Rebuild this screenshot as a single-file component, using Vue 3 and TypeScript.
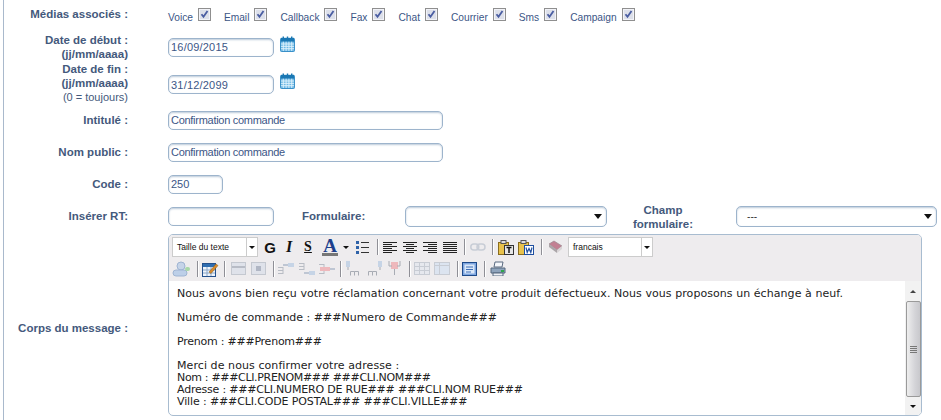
<script setup lang="ts">
const medias: string[] = ['Voice', 'Email', 'Callback', 'Fax', 'Chat', 'Courrier', 'Sms', 'Campaign']
const message: { text: string; track: number }[] = [
  { text: 'Nous avons bien reçu votre réclamation concernant votre produit défectueux. Nous vous proposons un échange à neuf.', track: 0.06 },
  { text: '', track: 0 },
  { text: 'Numéro de commande : ###Numero de Commande###', track: 0 },
  { text: '', track: 0 },
  { text: 'Prenom : ###Prenom###', track: -0.24 },
  { text: '', track: 0 },
  { text: 'Merci de nous confirmer votre adresse :', track: 0.08 },
  { text: 'Nom : ###CLI.PRENOM### ###CLI.NOM###', track: -0.33 },
  { text: 'Adresse : ###CLI.NUMERO DE RUE### ###CLI.NOM RUE###', track: -0.2 },
  { text: 'Ville : ###CLI.CODE POSTAL### ###CLI.VILLE###', track: -0.13 }
]
</script>

<template>
  <div class="page">
    <div class="row r-media">
      <div class="label up">Médias associés :</div>
      <div class="medias">
        <label v-for="m in medias" :key="m" class="media">
          <span>{{ m }}</span>
          <svg class="cb" width="13" height="13" viewBox="0 0 13 13">
            <rect x=".5" y=".5" width="12" height="12" fill="#dde0ea" stroke="#8f8f8f" />
            <rect x="1.5" y="1.5" width="10" height="10" fill="none" stroke="#f2f3f8" />
            <path d="M3.5 6.2 5.5 8.8 9.500 3" fill="none" stroke="#4a5da2" stroke-width="1.800" />
          </svg>
        </label>
      </div>
    </div>

    <div class="row r-d1">
      <div class="label lines"><span>Date de début :</span><span>(jj/mm/aaaa)</span></div>
      <input class="inp w-date" value="16/09/2015" />
      <svg class="cal" width="15" height="16" viewBox="0 0 16 17">
        <rect x=".5" y="2.5" width="15" height="14" rx="1" fill="#6fb9e6" stroke="#2f8ac4" />
        <rect x="1" y="2" width="14" height="4" fill="#1a78b4" />
        <path d="M3.5 .5v3M8 .5v3M12.5 .5v3" stroke="#1a78b4" stroke-width="1.500" />
        <path d="M1 8.500h14M1 11h14M1 13.500h14M3.500 6v10M6.500 6v10M9.500 6v10M12.500 6v10" stroke="#e0f2fc" />
      </svg>
    </div>

    <div class="row r-d2">
      <div class="label lines">
        <span>Date de fin :</span><span>(jj/mm/aaaa)</span><span class="thin">(0 = toujours)</span>
      </div>
      <input class="inp w-date low-inp" value="31/12/2099" />
      <svg class="cal low-cal" width="15" height="16" viewBox="0 0 16 17">
        <rect x=".5" y="2.5" width="15" height="14" rx="1" fill="#6fb9e6" stroke="#2f8ac4" />
        <rect x="1" y="2" width="14" height="4" fill="#1a78b4" />
        <path d="M3.5 .5v3M8 .5v3M12.5 .5v3" stroke="#1a78b4" stroke-width="1.500" />
        <path d="M1 8.500h14M1 11h14M1 13.500h14M3.500 6v10M6.500 6v10M9.500 6v10M12.500 6v10" stroke="#e0f2fc" />
      </svg>
    </div>

    <div class="row r-std">
      <div class="label">Intitulé :</div>
      <input class="inp w-long" value="Confirmation commande" />
    </div>
    <div class="row r-std">
      <div class="label">Nom public :</div>
      <input class="inp w-long" value="Confirmation commande" />
    </div>
    <div class="row r-std">
      <div class="label">Code :</div>
      <input class="inp w-code" value="250" />
    </div>

    <div class="row r-std">
      <div class="label">Insérer RT:</div>
      <input class="inp w-date" value="" />
      <div class="label-form">Formulaire:</div>
      <div class="sel w-form"><i class="tri"></i></div>
      <div class="label-champ">Champ<br />formulaire:</div>
      <div class="sel w-champ"><span>---</span><i class="tri"></i></div>
    </div>

    <div class="row r-editor">
      <div class="label low">Corps du message :</div>
      <div class="editor">
        <div class="toolbar">
          <div class="tbrow">
            <div class="mini w-size"><span>Taille du texte</span><b><i class="tri small"></i></b></div>
            <span class="glyph g-g">G</span>
            <span class="glyph g-i">I</span>
            <span class="glyph g-s">S</span>
            <span class="glyph g-a">A<i class="a-bar"></i></span>
            <i class="tri small a-tri"></i>
            <svg class="ic l-list" width="14" height="14" viewBox="0 0 14 14">
              <path d="M1 1h3v3H1zM1 6h3v3H1zM1 11h3v3H1z" fill="#2f62a8" />
              <path d="M6 2.500h8M6 7.500h8M6 12.500h8" stroke="#333" />
            </svg>
            <i class="sep s-a"></i>
            <svg class="ic l-al1" width="14" height="11" viewBox="0 0 14 11"><path d="M0 .5h14M0 2.500h9M0 4.500h14M0 6.500h9M0 8.500h14M0 10.500h9" stroke="#222" /></svg>
            <svg class="ic l-al" width="14" height="11" viewBox="0 0 14 11"><path d="M0 .5h14M3 2.500h8M0 4.500h14M3 6.500h8M0 8.500h14M3 10.500h8" stroke="#222" /></svg>
            <svg class="ic l-al" width="14" height="11" viewBox="0 0 14 11"><path d="M0 .5h14M5 2.500h9M0 4.500h14M5 6.500h9M0 8.500h14M5 10.500h9" stroke="#222" /></svg>
            <svg class="ic l-al" width="14" height="11" viewBox="0 0 14 11"><path d="M0 .5h14M0 2.500h14M0 4.500h14M0 6.500h14M0 8.500h14M0 10.500h14" stroke="#222" /></svg>
            <i class="sep s-b"></i>
            <svg class="ic l-link" width="16" height="8" viewBox="0 0 16 8">
              <rect x=".8" y="1" width="8" height="6" rx="3" fill="none" stroke="#c8cdd6" stroke-width="1.500" />
              <rect x="7" y="1" width="8" height="6" rx="3" fill="none" stroke="#c8cdd6" stroke-width="1.500" />
            </svg>
            <i class="sep s-c"></i>
            <svg class="ic l-p1" width="16" height="15" viewBox="0 0 16 15">
              <rect x=".5" y="2.500" width="10" height="12" fill="#e8c24c" stroke="#8a6d1f" />
              <rect x="3" y=".5" width="5" height="3" fill="#ddd" stroke="#555" />
              <rect x="6.500" y="5.500" width="9" height="9" fill="#e6e6e6" stroke="#333" />
              <path d="M8.500 7.500h5M11 7.500v5.500" stroke="#111" stroke-width="1.500" />
            </svg>
            <svg class="ic l-p2" width="16" height="15" viewBox="0 0 16 15">
              <rect x=".5" y="2.500" width="10" height="12" fill="#e8c24c" stroke="#8a6d1f" />
              <rect x="3" y=".5" width="5" height="3" fill="#ddd" stroke="#555" />
              <rect x="6.500" y="5.500" width="9" height="9" fill="#fff" stroke="#1e4fa0" />
              <path d="M8 7.500l1.200 5 1.800-4 1.800 4 1.200-5" fill="none" stroke="#1e4fa0" stroke-width="1.200" />
            </svg>
            <i class="sep s-d"></i>
            <svg class="ic l-book" width="15" height="14" viewBox="0 0 15 14">
              <path d="M1 4 6 1l8 5-5 4z" fill="#c27f92" stroke="#9a8a90" stroke-width=".7" />
              <path d="M1 4l8 6v3L1 7z" fill="#aaa5a8" />
              <path d="M9 10l5-4v3l-5 4z" fill="#d9d4d6" />
            </svg>
            <div class="mini w-lang"><span>francais</span><b><i class="tri small"></i></b></div>
          </div>
          <div class="tbrow two">
            <svg class="ic m-user" width="18" height="16" viewBox="0 0 18 16">
              <circle cx="9" cy="5" r="4" fill="#c6d4e8" stroke="#9fb4d2" />
              <rect x="1" y="9" width="14" height="6" rx="3" fill="#bccfe8" stroke="#9fb4d2" />
              <rect x="13" y="6" width="5" height="4" rx="2" fill="#a8d8a8" />
            </svg>
            <i class="sep m-s1"></i>
            <svg class="ic m-edit" width="17" height="16" viewBox="0 0 17 16">
              <rect x=".5" y="2.500" width="13" height="13" fill="#eef3fa" stroke="#24508c" />
              <rect x="1" y="3" width="12" height="3" fill="#2f6db0" />
              <path d="M1 9h12M1 12h12M5 6v9M9 6v9" stroke="#8aa6c8" />
              <path d="M7 11 14 3l2 1.600L9 12.500z" fill="#d88a2c" stroke="#8a5a14" stroke-width=".5" />
            </svg>
            <i class="sep m-s2"></i>
            <svg class="ic m-t1" width="15" height="13" viewBox="0 0 15 13"><rect x=".5" y=".5" width="14" height="12" fill="#dfe2ea" stroke="#c4c8d0" /><path d="M1 5h13" stroke="#b8bcc6" stroke-width="2" /></svg>
            <svg class="ic m-t2" width="15" height="13" viewBox="0 0 15 13"><rect x=".5" y=".5" width="14" height="12" fill="#dfe2ea" stroke="#c4c8d0" /><rect x="5" y="4" width="5" height="5" fill="#b0b6c4" /></svg>
            <i class="sep m-s3"></i>
            <svg class="ic m-r1" width="17" height="14" viewBox="0 0 17 14"><path d="M1 5.500h5M1 8.500h5M1 11.500h5M6 5v7" stroke="#b8bcc4" fill="none" /><rect x="11" y="1" width="6" height="4" fill="#c6d4e6" /><path d="M6 3h5" stroke="#8fa0b8" /></svg>
            <svg class="ic m-r2" width="17" height="14" viewBox="0 0 17 14"><path d="M1 1.500h5M1 4.500h5M1 7.500h5M6 1v7" stroke="#b8bcc4" fill="none" /><rect x="11" y="9" width="6" height="4" fill="#c6d4e6" /><path d="M6 11h5" stroke="#8fa0b8" /></svg>
            <svg class="ic m-r3" width="17" height="14" viewBox="0 0 17 14"><path d="M1 2.500h5M1 11.500h5M6 2v10" stroke="#b8bcc4" fill="none" /><rect x="2" y="5" width="10" height="4" fill="#eeb8bc" /><path d="M12 7h5" stroke="#8fa0b8" /></svg>
            <i class="sep m-s4"></i>
            <svg class="ic m-c1" width="16" height="15" viewBox="0 0 16 15"><rect x="1" y="0" width="4" height="6" fill="#c6d4e6" /><path d="M3 6v3M5.500 14.500v-4h4v4M9.500 10.500h4v4" stroke="#a8acb4" fill="none" /></svg>
            <svg class="ic m-c2" width="16" height="15" viewBox="0 0 16 15"><rect x="11" y="0" width="4" height="6" fill="#c6d4e6" /><path d="M13 6v3M1.500 14.500v-4h4v4M5.500 10.500h4v4" stroke="#a8acb4" fill="none" /></svg>
            <svg class="ic m-c3" width="15" height="15" viewBox="0 0 15 15"><rect x="4" y="1" width="7" height="7" fill="#eeb8bc" /><path d="M2 0v5h3M13 0v5h-3M7.500 8v6" stroke="#a8acb4" fill="none" /></svg>
            <i class="sep m-s5"></i>
            <svg class="ic m-g1" width="16" height="13" viewBox="0 0 16 13"><rect x=".5" y=".5" width="15" height="12" fill="#e6e8ee" stroke="#c8ccd4" /><path d="M1 4.500h14M1 8.500h14M5.500 1v11M10.500 1v11" stroke="#c8ccd4" /></svg>
            <svg class="ic m-g2" width="16" height="13" viewBox="0 0 16 13"><rect x=".5" y=".5" width="15" height="12" fill="#dce4f0" stroke="#c8ccd4" /><path d="M5.500 1v11M1 3.500h14" stroke="#c8ccd4" /></svg>
            <i class="sep m-s6"></i>
            <svg class="ic m-prev" width="15" height="14" viewBox="0 0 15 14"><rect x=".5" y=".5" width="14" height="13" fill="#7ea6e0" stroke="#1e4a8a" /><rect x="2.500" y="2.500" width="10" height="9" fill="#dbe8f8" /><path d="M4 5h7M4 7.500h7M4 10h5" stroke="#3f6fb8" /></svg>
            <i class="sep m-s7"></i>
            <svg class="ic m-print" width="16" height="15" viewBox="0 0 16 15"><path d="M5 1h8l-1 5H4z" fill="#f4f6fa" stroke="#5a6a80" /><path d="M1 7h14v5H1z" fill="#8fa4bc" stroke="#56687e" /><path d="M3 12h10v3H3z" fill="#eef1f6" stroke="#56687e" /><rect x="11" y="9" width="3" height="2" fill="#2fa84a" /></svg>
          </div>
        </div>
        <div class="body">
          <div class="text">
            <div v-for="(line, i) in message" :key="i" class="line" :style="{ letterSpacing: line.track + 'px' }">{{ line.text }}</div>
          </div>
          <div class="scroll">
            <i class="tri small flip"></i>
            <div class="thumb"><span></span></div>
            <i class="tri small"></i>
          </div>
        </div>
      </div>
    </div>
  </div>
</template>

<style>
html, body { background: #fff; overflow: hidden; }
</style>

<style scoped>
.page {
  margin-left: 3px;
  width: 938px;
  height: 420px;
  box-sizing: border-box;
  border-left: 1px solid #a9b9cc;
  font-family: "Liberation Sans", Arial, sans-serif;
  font-size: 10.2px;
  color: #3c5686;
  overflow: hidden;
}
.row { display: flex; align-items: center; }
.r-media { height: 32px; }
.r-d1 { height: 30px; }
.r-d2 { height: 42px; }
.r-std { height: 32px; }
.r-editor { height: 182px; margin-top: 2px; align-items: flex-start; }
.label {
  width: 124px;
  flex: none;
  margin-right: 40px;
  text-align: right;
  font-weight: bold;
  font-size: 11.5px;
  color: #44597c;
  line-height: 14px;
}
.label.up { padding-bottom: 4px; }
.label.low { margin-top: 87px; }
.lines { display: flex; flex-direction: column; }
.thin { font-weight: normal; font-size: 11px; }
.medias { display: flex; }
.media { display: flex; align-items: center; margin-right: 13px; padding-top: 2px; }
.cb { margin-left: 5px; margin-top: -5px; }
.inp {
  box-sizing: border-box;
  height: 19px;
  padding: 0 2px;
  border: 1px solid #9db4cc;
  border-radius: 5px;
  box-shadow: inset 0 1px 2px #bccada;
  font: 11px "Liberation Sans", Arial, sans-serif;
  color: #3c5686;
  background: #fff;
  outline: none;
}
.w-date { width: 106px; letter-spacing: .2px; }
.low-inp { margin-top: 3px; }
.w-long { width: 275px; letter-spacing: -.28px; }
.w-code { width: 55px; }
.cal { margin-left: 6px; margin-top: -7px; }
.low-cal { margin-top: -4px; }
.label-form { width: 63px; margin-left: 28px; font-weight: bold; font-size: 11.5px; color: #44597c; }
.sel {
  box-sizing: border-box;
  height: 21px;
  border: 1px solid #9db4cc;
  border-radius: 5px;
  box-shadow: inset 0 1px 2px #bccada;
  position: relative;
  display: flex;
  align-items: center;
  color: #333;
  padding-left: 10px;
}
.w-form { width: 202px; margin-left: 40px; }
.w-champ { width: 201px; margin-left: 38px; }
.label-champ { width: 70px; margin-left: 21px; text-align: center; font-weight: bold; font-size: 11.5px; color: #44597c; line-height: 14px; margin-top: 1px; }
.tri {
  position: absolute;
  right: 4px;
  top: 7px;
  border-left: 4px solid transparent;
  border-right: 4px solid transparent;
  border-top: 5px solid #111;
}
.tri.small { position: static; display: block; border-left-width: 3px; border-right-width: 3px; border-top-width: 3px; }
.tri.flip { border-top: 0; border-bottom: 3px solid #444; }
.editor {
  box-sizing: border-box;
  width: 754px;
  height: 182px;
  border: 1px solid #a8bcd0;
  border-radius: 5px;
  overflow: hidden;
  display: flex;
  flex-direction: column;
}
.toolbar { background: #eeecee; height: 46px; flex: none; padding: 2px 0 0 3px; box-sizing: border-box; }
.tbrow { display: flex; align-items: center; height: 20px; }
.tbrow.two { height: 23px; }
.mini {
  box-sizing: border-box;
  height: 20px;
  background: #fff;
  border: 1px solid #ccc;
  display: flex;
  align-items: center;
  font: 8.5px "Liberation Sans", Arial, sans-serif;
  color: #111;
  padding-left: 4px;
}
.mini span { flex: 1; }
.mini b { width: 10px; height: 100%; border-left: 1px solid #ccc; display: flex; align-items: center; justify-content: center; }
.w-size { width: 86px; }
.w-lang { width: 85px; margin-left: 5px; }
.glyph { font-family: "Liberation Serif", serif; font-weight: bold; color: #111; display: block; text-align: center; }
.g-g { font-family: "Liberation Sans", sans-serif; font-size: 15px; width: 14px; margin-left: 5px; }
.g-i { font-style: italic; font-size: 16px; width: 10px; margin-left: 7px; }
.g-s { font-size: 14px; text-decoration: underline; width: 12px; margin-left: 8px; }
.g-a { font-size: 19px; line-height: 15px; width: 16px; margin-left: 8px; color: #1d3f8c; position: relative; height: 18px; }
.a-bar { position: absolute; left: 0; right: 0; bottom: 0; height: 3px; background: #777; }
.a-tri { margin-left: 5px; }
.ic { flex: none; display: block; }
.sep { flex: none; display: block; width: 1px; height: 16px; background: #8f8f96; box-shadow: 1px 0 0 #fff; }
.l-list { margin-left: 6px; }
.s-a { margin-left: 8px; }
.l-al1 { margin-left: 5px; }
.l-al { margin-left: 6px; }
.s-b { margin-left: 7px; }
.l-link { margin-left: 5px; }
.s-c { margin-left: 6px; }
.l-p1 { margin-left: 5px; }
.l-p2 { margin-left: 4px; }
.s-d { margin-left: 7px; }
.l-book { margin-left: 6px; }
.m-user { margin-left: 0; }
.m-s1 { margin-left: 7px; }
.m-edit { margin-left: 4px; }
.m-s2 { margin-left: 5px; }
.m-t1 { margin-left: 6px; }
.m-t2 { margin-left: 5px; }
.m-s3 { margin-left: 7px; }
.m-r1 { margin-left: 3px; }
.m-r2 { margin-left: 4px; }
.m-r3 { margin-left: 3px; }
.m-s4 { margin-left: 5px; }
.m-c1 { margin-left: 4px; }
.m-c2 { margin-left: 6px; }
.m-c3 { margin-left: 4px; }
.m-s5 { margin-left: 7px; }
.m-g1 { margin-left: 4px; }
.m-g2 { margin-left: 4px; }
.m-s6 { margin-left: 7px; }
.m-prev { margin-left: 4px; }
.m-s7 { margin-left: 7px; }
.m-print { margin-left: 5px; }
.body { flex: 1; display: flex; min-height: 0; }
.text {
  flex: 1;
  padding: 7px 0 0 8px;
  font: 11px/12px "DejaVu Sans", Verdana, sans-serif;
  color: #222;
}
.line { white-space: pre; height: 12px; }
.scroll {
  width: 16px;
  flex: none;
  background: #f2f2f2;
  display: flex;
  flex-direction: column;
  align-items: center;
  padding-top: 9px;
  box-sizing: border-box;
}
.thumb {
  box-sizing: border-box;
  width: 15px;
  height: 96px;
  margin: 8px 0 8px;
  border: 1px solid #9a9a9a;
  border-radius: 2px;
  background: linear-gradient(90deg, #eee, #d4d4d8 60%, #c8c8cc);
  display: flex;
  align-items: center;
  justify-content: center;
}
.thumb span { display: block; width: 7px; height: 7px; background: repeating-linear-gradient(#777 0 1px, transparent 1px 2px); }
</style>
